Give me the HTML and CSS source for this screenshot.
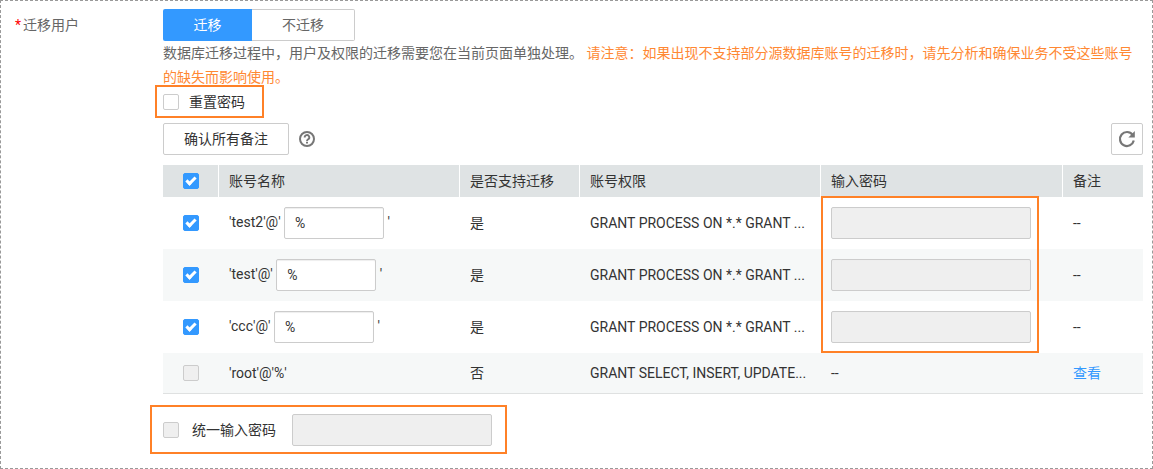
FILE: index.html
```
<!DOCTYPE html>
<html lang="zh-CN">
<head>
<meta charset="utf-8">
<title>迁移用户</title>
<link rel="stylesheet" href="styles.css">
</head>
<body>
<main class="panel">
  <div class="field-label"><span class="required">*</span>迁移用户</div>
  <div class="content">
    <div class="segmented">
      <button type="button" class="segment segment-active">迁移</button><button type="button" class="segment">不迁移</button>
    </div>
    <p class="tip">数据库迁移过程中，用户及权限的迁移需要您在当前页面单独处理。 <span class="warning">请注意：如果出现不支持部分源数据库账号的迁移时，请先分析和确保业务不受这些账号的缺失而影响使用。</span></p>
    <div class="reset highlight">
      <input type="checkbox" class="check" id="reset"><label for="reset">重置密码</label>
    </div>
    <div class="toolbar">
      <button type="button" class="button">确认所有备注</button>
      <svg class="help" viewBox="0 0 16 16" role="img" aria-label="帮助"><circle cx="8" cy="8" r="7" fill="none" stroke="#777" stroke-width="2"/><path d="M5.7 6.5a2.3 2.3 0 1 1 3.6 1.7C8.4 8.8 8 9 8 10" fill="none" stroke="#777" stroke-width="1.9"/><path d="M7 10.8h2v1.8H7z" fill="#777"/></svg>
      <button type="button" class="button refresh" aria-label="刷新"><svg viewBox="0 0 18 18"><path d="M14.6 4.8A7 7 0 1 0 15.8 10.6" fill="none" stroke="#777" stroke-width="2.2"/><path d="M16.8 1v6.4h-6.4z" fill="#777"/></svg></button>
    </div>
    <table class="accounts">
      <colgroup><col class="col-check"><col class="col-name"><col class="col-support"><col class="col-grant"><col class="col-password"><col class="col-note"></colgroup>
      <thead>
        <tr><th><input type="checkbox" class="check" aria-label="全选" checked></th><th>账号名称</th><th>是否支持迁移</th><th>账号权限</th><th>输入密码</th><th>备注</th></tr>
      </thead>
      <tbody>
        <tr><td><input type="checkbox" class="check" aria-label="test2" checked></td><td>'test2'@' <input type="text" class="text host" aria-label="test2 主机" value="%"> '</td><td>是</td><td class="grant">GRANT PROCESS ON *.* GRANT ...</td><td class="password-mark"><input type="password" class="text password" aria-label="test2 密码" disabled></td><td>--</td></tr>
        <tr><td><input type="checkbox" class="check" aria-label="test" checked></td><td>'test'@' <input type="text" class="text host" aria-label="test 主机" value="%"> '</td><td>是</td><td class="grant">GRANT PROCESS ON *.* GRANT ...</td><td><input type="password" class="text password" aria-label="test 密码" disabled></td><td>--</td></tr>
        <tr><td><input type="checkbox" class="check" aria-label="ccc" checked></td><td>'ccc'@' <input type="text" class="text host" aria-label="ccc 主机" value="%"> '</td><td>是</td><td class="grant">GRANT PROCESS ON *.* GRANT ...</td><td><input type="password" class="text password" aria-label="ccc 密码" disabled></td><td>--</td></tr>
        <tr><td><input type="checkbox" class="check" aria-label="root" disabled></td><td>'root'@'%'</td><td>否</td><td class="grant">GRANT SELECT, INSERT, UPDATE...</td><td>--</td><td><a href="#">查看</a></td></tr>
      </tbody>
    </table>
    <div class="unified highlight">
      <input type="checkbox" class="check" id="unified" disabled><label for="unified">统一输入密码</label>
      <input type="password" class="text password" aria-label="统一密码" disabled>
    </div>
  </div>
</main>
</body>
</html>
```
FILE: styles.css
```
*,
*::after {
  box-sizing: border-box;
}

body {
  margin: 0;
  background: #fff;
  color: #333;
  font: 14px/20px Roboto, "Noto Sans CJK SC", sans-serif;
}

button,
input {
  margin: 0;
  font: inherit;
  color: inherit;
}

.panel {
  display: flex;
  padding: 8px 9px 14px 14px;
  border: 1px dashed #999;
}

.field-label {
  flex: none;
  width: 148px;
  padding-top: 6px;
  color: #666;
}

.required {
  margin-right: 2px;
  color: #f00;
}

.content {
  flex: 1;
  min-width: 0;
}

.segmented {
  display: flex;
}

.segment {
  width: 103px;
  height: 32px;
  padding: 0;
  border: 1px solid #ccc;
  border-left: 0;
  border-radius: 0 2px 2px 0;
  background: #fff;
  color: #666;
}

.segment-active {
  width: 89px;
  border: 0;
  border-radius: 2px 0 0 2px;
  background: #39f;
  color: #fff;
}

.tip {
  margin: 0;
  line-height: 24px;
  color: #666;
}

.warning {
  color: #ff8833;
}

.highlight {
  display: flex;
  align-items: center;
  width: fit-content;
  border: 2px solid #ff8127;
}

.reset {
  height: 33px;
  margin: -4px 0 0 -8px;
  padding: 0 17px 0 6px;
}

.reset label {
  margin-left: 10px;
}

.check {
  appearance: none;
  flex: none;
  display: block;
  width: 16px;
  height: 16px;
  border: 1px solid #ccc;
  border-radius: 2px;
  background: #fff;
}

.check:checked {
  display: grid;
  place-items: center;
  border-color: #39f;
  background: #39f;
}

.check:checked::after {
  content: "";
  width: 10px;
  height: 6px;
  margin-bottom: 2px;
  border: solid #fff;
  border-width: 0 0 3px 3px;
  transform: rotate(-45deg);
}

.check:disabled {
  background: #efefef;
}

.toolbar {
  display: flex;
  align-items: center;
  margin: 5px 0 10px;
}

.button {
  height: 32px;
  padding: 0 20px;
  border: 1px solid #ccc;
  border-radius: 2px;
  background: #fff;
}

.help {
  width: 16px;
  height: 16px;
  margin-left: 10px;
}

.refresh {
  display: grid;
  place-items: center;
  width: 32px;
  margin-left: auto;
  padding: 0;
}

.refresh svg {
  width: 18px;
  height: 18px;
}

.accounts {
  width: 100%;
  table-layout: fixed;
  border-collapse: separate;
  border-spacing: 0;
  border-bottom: 1px solid #dfe1e1;
}

.col-check {
  width: 56px;
}

.col-name,
.col-grant {
  width: 241px;
}

.col-support {
  width: 120px;
}

.col-password {
  width: 242px;
}

.accounts th {
  height: 32px;
  padding: 0 10px;
  border-right: 1px solid #fff;
  background: #dfe3e4;
  font-weight: 400;
  text-align: left;
}

.accounts th:last-child {
  border-right: 0;
}

.accounts td {
  height: 40px;
  padding: 10px;
  white-space: nowrap;
}

.accounts tr > :first-child {
  padding-left: 20px;
}

.accounts tbody tr:nth-child(even) {
  background: #f6f8f8;
}

.grant {
  overflow: hidden;
  text-overflow: ellipsis;
}

.text {
  height: 32px;
  padding: 0 10px;
  border: 1px solid #ccc;
  border-radius: 2px;
  background: #fff;
  box-shadow: inset 0 1px 1px #eee;
}

.host {
  width: 100px;
  vertical-align: middle;
}

.password {
  display: block;
  width: 200px;
}

.password:disabled {
  background: #efefef;
}

.password-mark {
  position: relative;
}

.password-mark::after {
  content: "";
  position: absolute;
  top: -1px;
  left: 0;
  width: 218px;
  height: calc(300% + 1px);
  border: 2px solid #ff8127;
  pointer-events: none;
}

.unified {
  height: 49px;
  margin: 11px 0 0 -13px;
  padding: 0 13px 0 11px;
}

.unified label {
  margin: 0 16px 0 13px;
}

a {
  color: #39f;
  text-decoration: none;
}
```
